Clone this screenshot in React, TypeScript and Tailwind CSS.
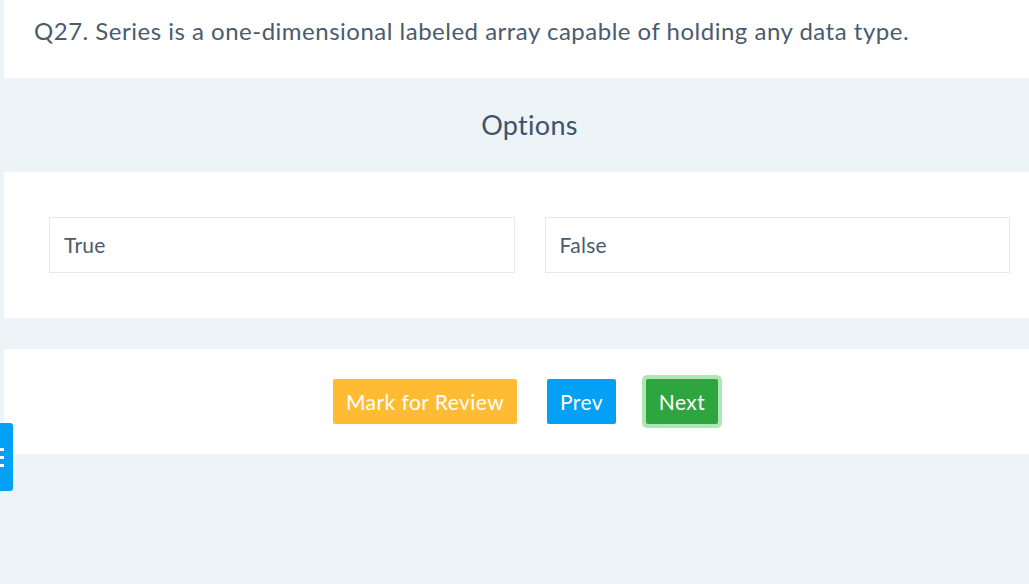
export default function App() {
  return (
    <div
      className="relative min-h-screen w-full overflow-hidden bg-[#ecf4f8] pl-1 text-[#4a5b6e]"
      style={{ fontFamily: "Lato, 'Noto Sans', sans-serif" }}
    >
      <div className="w-[1051px]">
        <div className="h-[78px] bg-white px-[30px] pt-[16px]">
          <p className="text-[24px] leading-[30px] tracking-[0.5px]">
            Q27. Series is a one-dimensional labeled array capable of holding any data type.
          </p>
        </div>

        <div className="flex h-[94px] items-center justify-center">
          <h2 className="text-[27px] tracking-[0.3px] text-[#3f5269]">Options</h2>
        </div>

        <div className="grid grid-cols-2 gap-[30px] bg-white p-[45px]">
          <div className="flex h-[56px] items-center border border-[#e6e9ec] px-[14px] text-[21px] tracking-[0.3px]">True</div>
          <div className="flex h-[56px] items-center border border-[#e6e9ec] px-[14px] text-[21px] tracking-[0.3px]">False</div>
        </div>

        <div className="mt-[31px] flex items-center justify-center gap-[30px] bg-white py-[30px] pr-[8px]">
          <button className="h-[45px] w-[184px] rounded-[2px] bg-[#ffbb33] text-[21px] tracking-[0.45px] text-white">
            Mark for Review
          </button>
          <button className="h-[45px] w-[69px] rounded-[2px] bg-[#03a0f6] text-[21px] tracking-[0.45px] text-white">Prev</button>
          <button className="h-[45px] w-[72px] rounded-[2px] bg-[#2fa540] text-[21px] tracking-[0.45px] text-white ring-4 ring-[#aee6b5]">
            Next
          </button>
        </div>
      </div>

      <div className="absolute left-0 top-[423px] flex h-[68px] w-[13px] flex-col justify-center gap-[5px] rounded-r-[3px] bg-[#03a0f6]">
        <span className="block h-[3px] w-[4px] bg-white" />
        <span className="block h-[3px] w-[4px] bg-white" />
        <span className="block h-[3px] w-[4px] bg-white" />
      </div>
    </div>
  );
}
